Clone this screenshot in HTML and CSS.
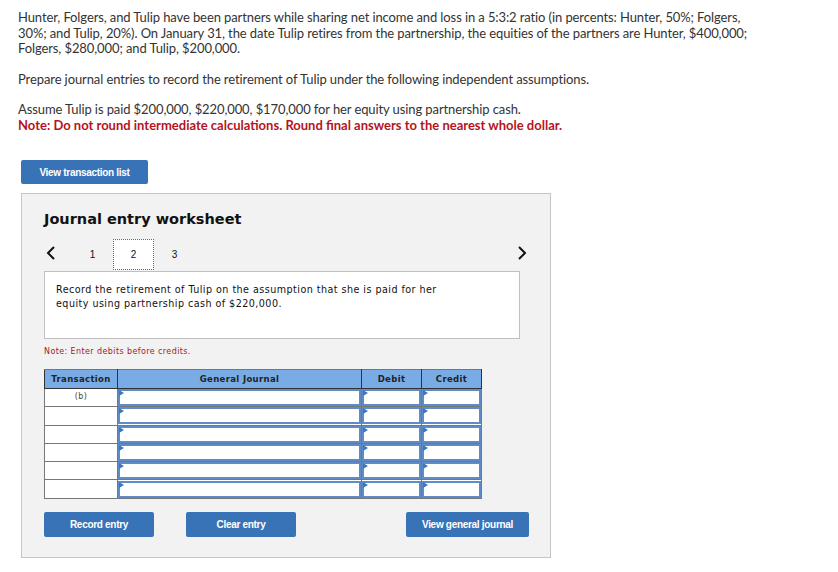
FILE: index.html
```html
<!DOCTYPE html>
<html lang="en">

<head>
    <meta charset="UTF-8">
    <title>Journal entry worksheet</title>
    <link rel="stylesheet" href="styles.css">
</head>

<body>
    <div class="pergunta">
        <p>Hunter, Folgers, and Tulip have been partners while sharing net income and loss in a 5:3:2 ratio (in percents: Hunter, 50%; Folgers, 30%; and Tulip, 20%). On January 31, the date Tulip retires from the partnership, the equities of the partners are Hunter, $400,000; Folgers, $280,000; and Tulip, $200,000.</p>
        <p>Prepare journal entries to record the retirement of Tulip under the following independent assumptions.</p>
        <p>Assume Tulip is paid $200,000, $220,000, $170,000 for her equity using partnership cash.<br>
            <span class="aviso">Note: Do not round intermediate calculations. Round final answers to the nearest whole dollar.</span></p>
    </div>

    <button class="botao botao-lista">View transaction list</button>

    <div class="painel">
        <h2>Journal entry worksheet</h2>

        <div class="navegacao">
            <span class="seta">
                <svg width="10" height="14" viewBox="0 0 10 14"><polyline points="8,1 2,7 8,13" fill="none" stroke="#111" stroke-width="2"/></svg>
            </span>
            <span class="pagina">1</span>
            <span class="pagina ativa">2</span>
            <span class="pagina">3</span>
            <span class="seta seta-dir">
                <svg width="10" height="14" viewBox="0 0 10 14"><polyline points="2,1 8,7 2,13" fill="none" stroke="#111" stroke-width="2"/></svg>
            </span>
        </div>

        <div class="descricao">
            Record the retirement of Tulip on the assumption that she is paid for her<br>
            equity using partnership cash of $220,000.
        </div>

        <p class="nota">Note: Enter debits before credits.</p>

        <table class="diario">
            <tr>
                <th class="col-trans">Transaction</th>
                <th class="col-geral">General Journal</th>
                <th class="col-valor">Debit</th>
                <th class="col-valor">Credit</th>
            </tr>
            <tr>
                <td class="trans">(b)</td>
                <td><div class="campo"></div></td>
                <td><div class="campo"></div></td>
                <td><div class="campo"></div></td>
            </tr>
            <tr>
                <td class="trans"></td>
                <td><div class="campo"></div></td>
                <td><div class="campo"></div></td>
                <td><div class="campo"></div></td>
            </tr>
            <tr>
                <td class="trans"></td>
                <td><div class="campo"></div></td>
                <td><div class="campo"></div></td>
                <td><div class="campo"></div></td>
            </tr>
            <tr>
                <td class="trans"></td>
                <td><div class="campo"></div></td>
                <td><div class="campo"></div></td>
                <td><div class="campo"></div></td>
            </tr>
            <tr>
                <td class="trans"></td>
                <td><div class="campo"></div></td>
                <td><div class="campo"></div></td>
                <td><div class="campo"></div></td>
            </tr>
            <tr>
                <td class="trans"></td>
                <td><div class="campo"></div></td>
                <td><div class="campo"></div></td>
                <td><div class="campo"></div></td>
            </tr>
        </table>

        <div class="acoes">
            <button class="botao botao-acao">Record entry</button>
            <button class="botao botao-acao">Clear entry</button>
            <button class="botao botao-geral">View general journal</button>
        </div>
    </div>
</body>

</html>
```

FILE: styles.css
```css
* {
    margin: 0;
    padding: 0;
    box-sizing: border-box;
}

body {
    background-color: white;
    color: #333;
    font-family: Lato, "Liberation Sans", sans-serif;
}

.pergunta {
    width: 748px;
    padding: 10px 0 0 18px;
    font-size: 13px;
    letter-spacing: -0.1px;
    line-height: 15.5px;
}

.pergunta p {
    margin-bottom: 15px;
}

.aviso {
    color: #b5141c;
    font-weight: bold;
    letter-spacing: 0;
}

.botao {
    background-color: #3873b8;
    color: white;
    border: none;
    border-radius: 2px;
    font-family: "Liberation Sans", sans-serif;
    font-weight: bold;
    font-size: 10px;
    letter-spacing: -0.3px;
    cursor: pointer;
}

.botao-lista {
    display: block;
    width: 127px;
    height: 24px;
    margin: 27px 0 0 21px;
}

.painel {
    width: 530px;
    height: 365px;
    margin: 9px 0 0 21px;
    background-color: #f2f2f2;
    border: 1px solid #c6c6c6;
    padding: 0 22px;
}

/* o original parece Verdana, a DejaVu Sans e a mais proxima */
.painel h2 {
    font-family: "DejaVu Sans", sans-serif;
    font-size: 14.5px;
    color: #111;
    margin-top: 17px;
    height: 28px;
}

.navegacao {
    display: flex;
    align-items: center;
    height: 32px;
    font-family: "Liberation Sans", sans-serif;
    font-size: 10px;
    color: #111;
}

.seta {
    width: 28px;
    padding-left: 2px;
    display: flex;
    margin-top: -4px;
}

.pagina {
    width: 41px;
    height: 31px;
    display: flex;
    align-items: center;
    justify-content: center;
    margin-top: -2px;
}

.ativa {
    background-color: white;
    border: 1px dotted #3b6fb0;
}

.seta-dir {
    margin-left: auto;
    justify-content: flex-end;
    padding: 0 1px 0 0;
}

.descricao {
    width: 476px;
    height: 68px;
    background-color: white;
    border: 1px solid #c0c0c0;
    padding: 11px 11px;
    font-family: "DejaVu Sans", sans-serif;
    font-size: 9.6px;
    letter-spacing: 0.45px;
    line-height: 14px;
    color: #111;
}

.nota {
    font-family: "DejaVu Sans", sans-serif;
    font-size: 8px;
    letter-spacing: 0.4px;
    color: #a2202c;
    margin-top: 8px;
    height: 22px;
}

.diario {
    border-collapse: collapse;
    border: 1px solid #777;
    width: 438px;
    font-family: "DejaVu Sans", sans-serif;
}

.diario th {
    background-color: #79ace4;
    border: 1px solid #333;
    border-top-color: #777;
    height: 19px;
    font-size: 8.5px;
    letter-spacing: 0.35px;
    color: #222;
}

.col-trans { width: 73px; }
.col-geral { width: 244px; }
.col-valor { width: 60px; }

.diario td {
    height: 18.3px;
    border: 1px solid #777;
    background-color: white;
    padding: 0;
}

.trans {
    text-align: center;
    vertical-align: top;
    font-size: 8px;
    letter-spacing: 0.4px;
    color: #444;
    padding-top: 3px !important;
}

.campo {
    position: relative;
    height: 17px;
    border: 2px solid #5f8cc6;
    background-color: white;
}

/* triangulo azul no canto do campo */
.campo::before {
    content: "";
    position: absolute;
    top: -1px;
    left: -1px;
    border-top: 3px solid transparent;
    border-bottom: 3px solid transparent;
    border-left: 5px solid #3a78c4;
}

.acoes {
    display: flex;
    margin-top: 13px;
}

.botao-acao {
    width: 110px;
    height: 25px;
    margin-right: 32px;
}

.botao-geral {
    width: 123px;
    height: 25px;
    margin-left: auto;
    margin-right: -1px;
}
```
